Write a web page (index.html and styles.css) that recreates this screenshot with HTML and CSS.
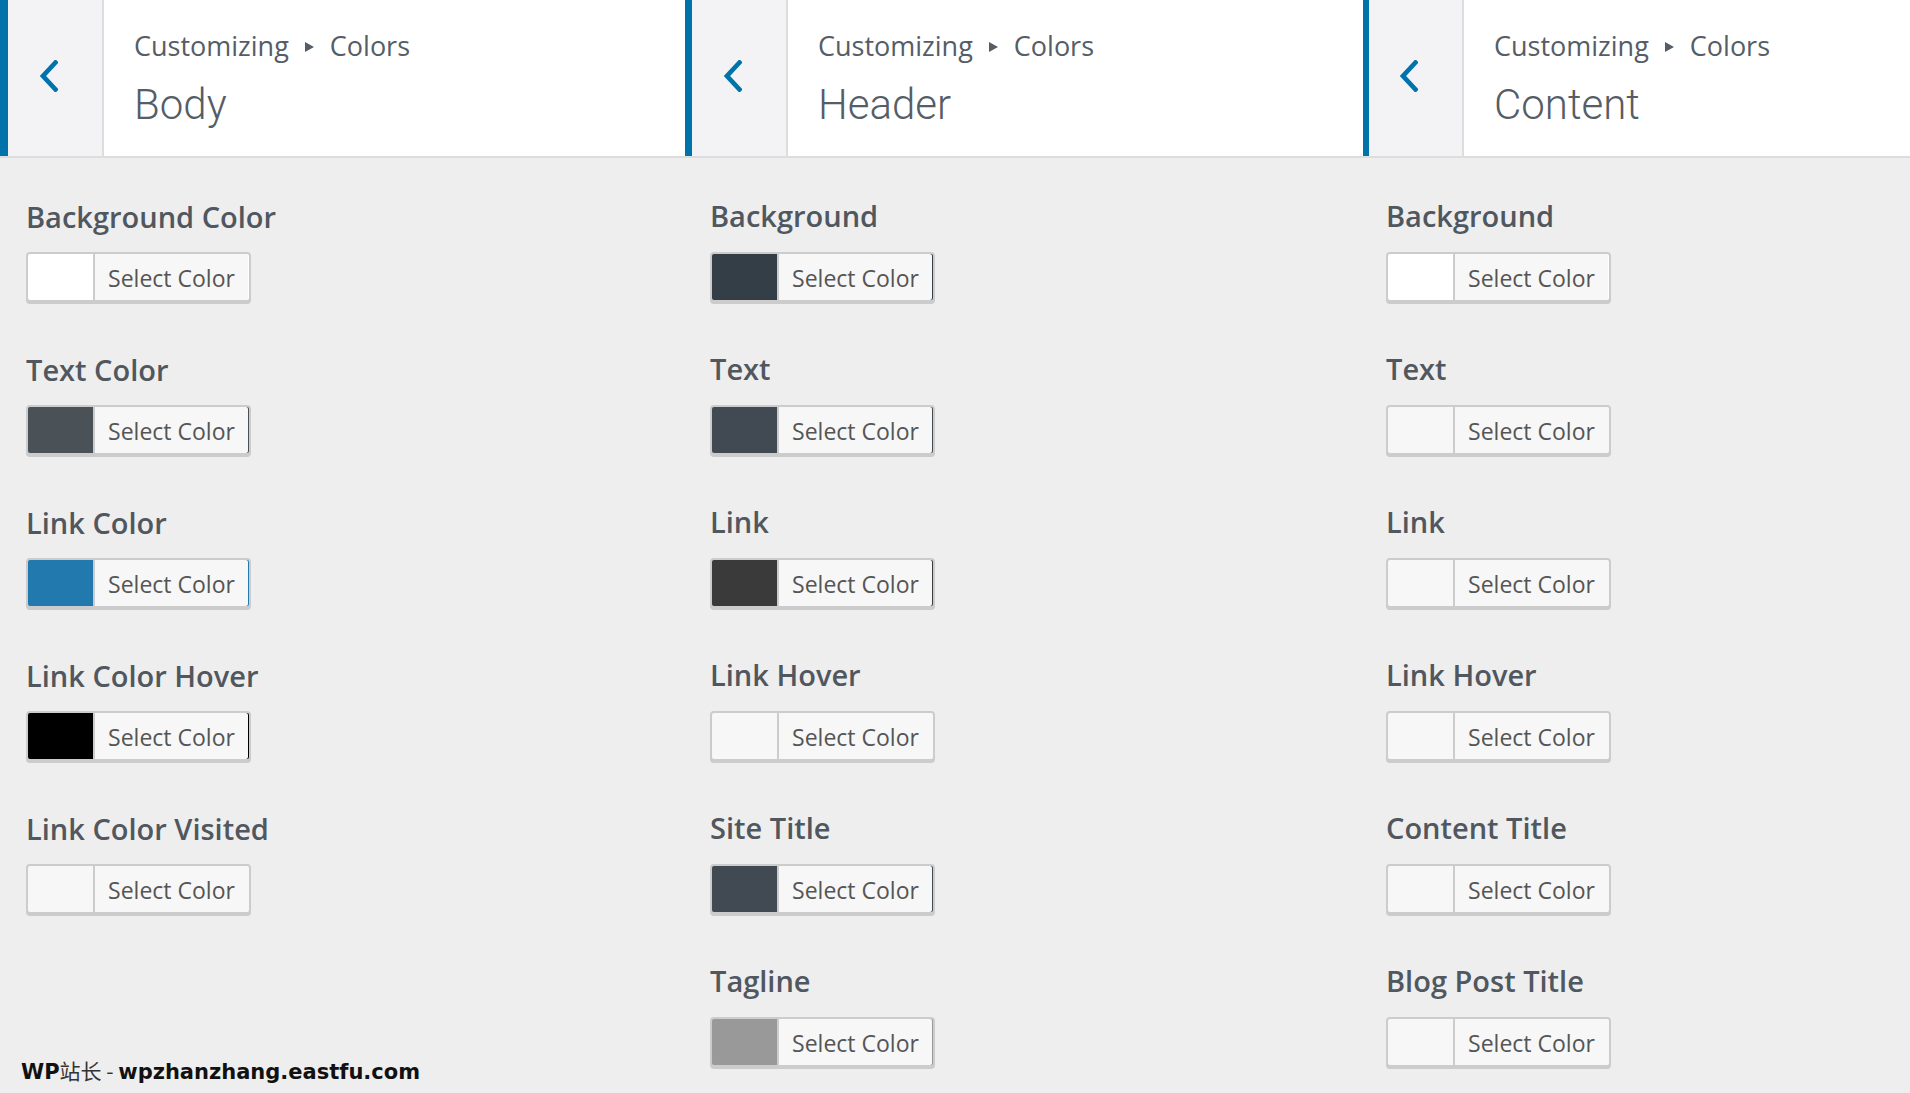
FILE: index.html
```html
<!DOCTYPE html>
<html lang="en">
<head>
<meta charset="utf-8">
<title>Customizing Colors</title>
<link rel="stylesheet" href="styles.css">
</head>
<body>
<div class="panels">
  <section class="panel panel-body">
    <header class="panel-head">
      <div class="back"><svg class="chev" viewBox="0 0 18 32" width="18" height="32"><polyline points="15.5,2.5 3,16 15.5,29.5" /></svg></div>
      <div class="info">
        <div class="crumb">Customizing<span class="tri"></span>Colors</div>
        <h3 class="title">Body</h3>
      </div>
    </header>
    <div class="controls">
      <div class="control"><div class="label">Background Color</div><div class="cbtn c-white"><span class="sw"></span><span class="txt">Select Color</span></div></div>
      <div class="control"><div class="label">Text Color</div><div class="cbtn c-gray"><span class="sw"></span><span class="txt">Select Color</span></div></div>
      <div class="control"><div class="label">Link Color</div><div class="cbtn c-blue"><span class="sw"></span><span class="txt">Select Color</span></div></div>
      <div class="control"><div class="label">Link Color Hover</div><div class="cbtn c-black"><span class="sw"></span><span class="txt">Select Color</span></div></div>
      <div class="control"><div class="label">Link Color Visited</div><div class="cbtn c-empty"><span class="sw"></span><span class="txt">Select Color</span></div></div>
    </div>
  </section>
  <section class="panel panel-header">
    <header class="panel-head">
      <div class="back"><svg class="chev" viewBox="0 0 18 32" width="18" height="32"><polyline points="15.5,2.5 3,16 15.5,29.5" /></svg></div>
      <div class="info">
        <div class="crumb">Customizing<span class="tri"></span>Colors</div>
        <h3 class="title">Header</h3>
      </div>
    </header>
    <div class="controls">
      <div class="control"><div class="label">Background</div><div class="cbtn c-slate"><span class="sw"></span><span class="txt">Select Color</span></div></div>
      <div class="control"><div class="label">Text</div><div class="cbtn c-slate2"><span class="sw"></span><span class="txt">Select Color</span></div></div>
      <div class="control"><div class="label">Link</div><div class="cbtn c-dark"><span class="sw"></span><span class="txt">Select Color</span></div></div>
      <div class="control"><div class="label">Link Hover</div><div class="cbtn c-empty"><span class="sw"></span><span class="txt">Select Color</span></div></div>
      <div class="control"><div class="label">Site Title</div><div class="cbtn c-slate2"><span class="sw"></span><span class="txt">Select Color</span></div></div>
      <div class="control"><div class="label">Tagline</div><div class="cbtn c-mid"><span class="sw"></span><span class="txt">Select Color</span></div></div>
    </div>
  </section>
  <section class="panel panel-content">
    <header class="panel-head">
      <div class="back"><svg class="chev" viewBox="0 0 18 32" width="18" height="32"><polyline points="15.5,2.5 3,16 15.5,29.5" /></svg></div>
      <div class="info">
        <div class="crumb">Customizing<span class="tri"></span>Colors</div>
        <h3 class="title">Content</h3>
      </div>
    </header>
    <div class="controls">
      <div class="control"><div class="label">Background</div><div class="cbtn c-white"><span class="sw"></span><span class="txt">Select Color</span></div></div>
      <div class="control"><div class="label">Text</div><div class="cbtn c-empty"><span class="sw"></span><span class="txt">Select Color</span></div></div>
      <div class="control"><div class="label">Link</div><div class="cbtn c-empty"><span class="sw"></span><span class="txt">Select Color</span></div></div>
      <div class="control"><div class="label">Link Hover</div><div class="cbtn c-empty"><span class="sw"></span><span class="txt">Select Color</span></div></div>
      <div class="control"><div class="label">Content Title</div><div class="cbtn c-empty"><span class="sw"></span><span class="txt">Select Color</span></div></div>
      <div class="control"><div class="label">Blog Post Title</div><div class="cbtn c-empty"><span class="sw"></span><span class="txt">Select Color</span></div></div>
    </div>
  </section>
</div>
<div class="watermark"><b>WP</b><span class="cjk">站长 - </span><b>wpzhanzhang.eastfu.com</b></div>
</body>
</html>
```
FILE: styles.css
```css
html, body {
  margin: 0;
  padding: 0;
}
body {
  width: 1910px;
  height: 1093px;
  overflow: hidden;
  background: #eeeeee;
  font-family: "Open Sans", "Noto Sans", sans-serif;
  position: relative;
}
.panels {
  display: grid;
  grid-template-columns: 685px 678px 1fr;
  height: 100%;
}
.panel {
  display: flex;
  flex-direction: column;
}
.panel-head {
  display: flex;
  height: 156px;
  background: #fff;
  border-bottom: 2px solid #dddddd;
}
.back {
  flex: none;
  width: 104px;
  box-sizing: border-box;
  background: #f3f3f5;
  border-left: 7px solid #0073aa;
  border-right: 2px solid #dddddd;
  display: flex;
  align-items: center;
  padding-left: 32px;
}
.panel-body .back { border-left-width: 8px; }
.panel-header .back { width: 103px; }
.panel-content .back { width: 101px; border-left-width: 6px; padding-left: 31px; }
.chev {
  display: block;
  margin-top: -4px;
}
.chev polyline {
  fill: none;
  stroke: #0073aa;
  stroke-width: 4.6;
  stroke-linecap: square;
  stroke-linejoin: miter;
}
.info {
  padding: 28px 0 0 30px;
  color: #555d66;
}
.crumb {
  font-size: 27px;
  line-height: 36px;
  display: flex;
  align-items: center;
}
.tri {
  display: inline-block;
  width: 0;
  height: 0;
  border-left: 9px solid #555d66;
  border-top: 5px solid transparent;
  border-bottom: 5px solid transparent;
  margin: 0 16px;
  position: relative;
  top: 1px;
}
.title {
  margin: 16px 0 0 0;
  font-family: Roboto, "Noto Sans", sans-serif;
  font-size: 42px;
  line-height: 50px;
  font-weight: 300;
}
.controls {
  padding: 39px 0 0 25px;
}
.panel-body .controls { padding-left: 26px; }
.panel-content .controls { padding-left: 23px; }
.panel-header .controls,
.panel-content .controls { padding-top: 38px; }
.control {
  height: 153px;
}
.label {
  font-size: 29px;
  line-height: 40px;
  font-weight: 600;
  color: #50575f;
  margin-bottom: 15px;
}
.panel-header .label,
.panel-content .label { margin-bottom: 16px; }
.cbtn {
  display: flex;
  width: 225px;
  height: 50px;
  box-sizing: border-box;
  border: 2px solid #cccccc;
  border-radius: 4px;
  box-shadow: 0 2px 0 #cccccc;
  overflow: hidden;
}
.sw {
  width: 65px;
  flex: none;
}
.txt {
  flex: 1;
  background: #f7f7f7;
  border-left: 2px solid #cccccc;
  border-radius: 0 2px 2px 0;
  margin-right: 1px;
  text-align: center;
  font-size: 23px;
  line-height: 48px;
  color: #555555;
}
.c-white { background: #ffffff; }
.c-empty { background: #f7f7f7; }
.c-gray { background: #4a5157; }
.c-blue { background: #2279ae; }
.c-black { background: #000000; }
.c-slate { background: #343e47; }
.c-slate2 { background: #414a53; }
.c-dark { background: #3a3a3a; }
.c-mid { background: #999999; }
.watermark {
  position: absolute;
  left: 21px;
  top: 1057px;
  font-family: "DejaVu Sans", "Noto Sans CJK SC", sans-serif;
  font-size: 21px;
  line-height: 26px;
  color: #111111;
}
.watermark b { font-weight: 700; }
.watermark .cjk {
  font-family: "Noto Sans CJK SC", "DejaVu Sans", sans-serif;
  font-weight: 400;
  color: #333;
}
```
